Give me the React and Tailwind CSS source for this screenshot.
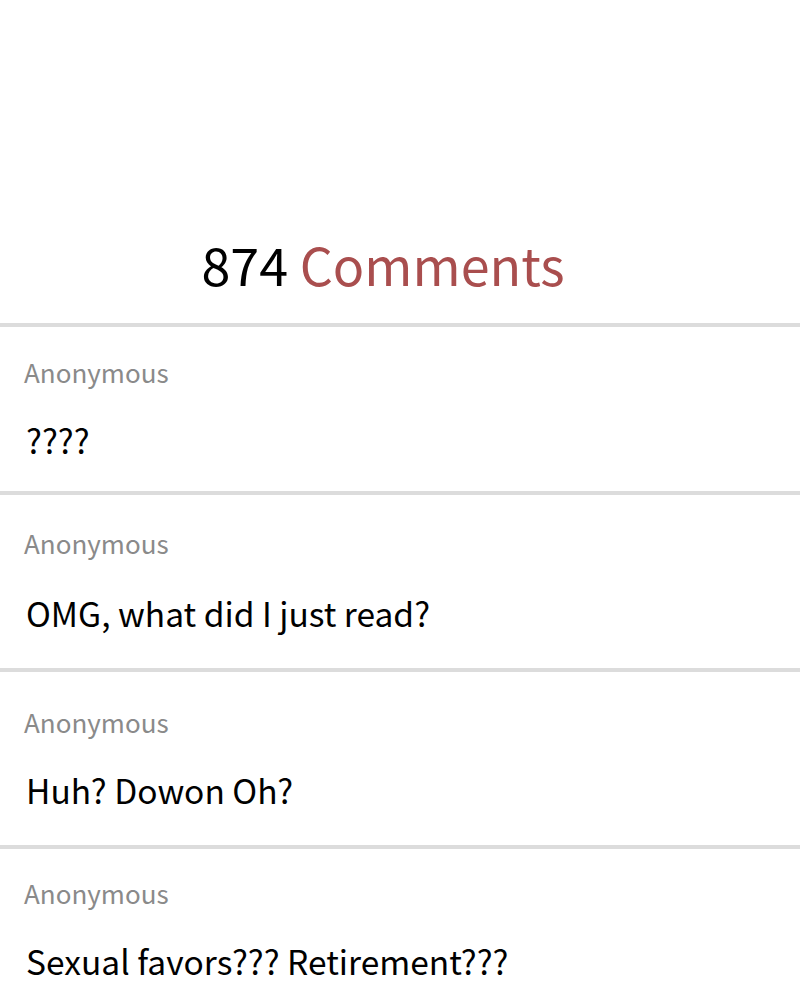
export default function App() {
    const comments = [
        { name: "Anonymous", text: "????", box: "h-[168px] pt-[27px]", gap: "mt-[28px]" },
        { name: "Anonymous", text: "OMG, what did I just read?", box: "h-[177px] pt-[30px]", gap: "mt-[30px]" },
        { name: "Anonymous", text: "Huh? Dowon Oh?", box: "h-[177px] pt-[32px]", gap: "mt-[28px]" },
        { name: "Anonymous", text: "Sexual favors??? Retirement???", box: "h-[177px] pt-[26px]", gap: "mt-[28px]" },
    ]

    return (
        <div
            className="w-[800px] h-[1000px] overflow-hidden bg-white"
            style={{ fontFamily: '"Noto Sans CJK SC", "Noto Sans", sans-serif' }}
        >
            <div className="h-[323px] flex items-end justify-center pb-[15px] pr-[34px]">
                <h2 className="text-[52px] leading-[88px] font-normal">
                    <span className="text-black">874 </span>
                    <span className="text-[#a94e4e]">Comments</span>
                </h2>
            </div>
            {comments.map((c, i) => (
                <div key={i} className={"border-t-4 border-[#dcdcdc] px-6 " + c.box}>
                    <div className="text-[26px] leading-[36px] text-[#8a8a8a]">{c.name}</div>
                    <div className={c.gap + " text-[33.5px] leading-[44px] text-black pl-[2px]"}>{c.text}</div>
                </div>
            ))}
        </div>
    )
}
